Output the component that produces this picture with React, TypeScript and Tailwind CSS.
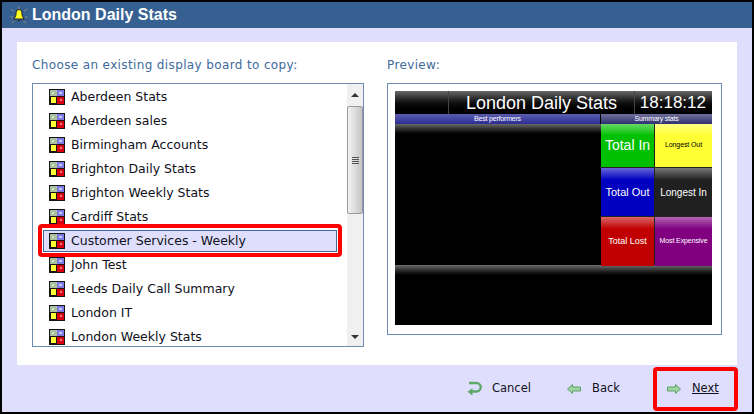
import React from "react";

const items = [
  "Aberdeen Stats",
  "Aberdeen sales",
  "Birmingham Accounts",
  "Brighton Daily Stats",
  "Brighton Weekly Stats",
  "Cardiff Stats",
  "Customer Services - Weekly",
  "John Test",
  "Leeds Daily Call Summary",
  "London IT",
  "London Weekly Stats",
];

function BoardIcon() {
  return (
    <svg width="16" height="16" viewBox="0 0 16 16" className="block shrink-0" shapeRendering="crispEdges">
      <rect width="16" height="16" fill="#141414" />
      <rect x="1" y="1" width="7" height="6" fill="#a9bf9e" />
      <rect x="8" y="1" width="7" height="6" fill="#7c7ce4" />
      <rect x="3" y="3" width="2" height="2" fill="#d4e2cc" />
      <rect x="10" y="3" width="3" height="2" fill="#c4c4fa" />
      <rect x="2" y="8" width="5" height="6" fill="#ffff33" />
      <rect x="8" y="8" width="7" height="7" fill="#d80010" />
      <rect x="11" y="10" width="2" height="2" fill="#ff8080" />
    </svg>
  );
}

function ArrowIcon({ dir }: { dir: "left" | "right" }) {
  return (
    <svg width="14" height="10" viewBox="0 0 14 10" className="shrink-0">
      <path
        d={dir === "left" ? "M5.5 0.5 L0.5 5 L5.5 9.5 V7 H13.5 V3 H5.5 Z" : "M8.5 0.5 L13.5 5 L8.5 9.5 V7 H0.5 V3 H8.5 Z"}
        fill="#9fd49f"
        stroke="#5f9f68"
        strokeWidth="1"
      />
    </svg>
  );
}

function CancelIcon() {
  return (
    <svg width="15" height="15" viewBox="0 0 15 15" className="shrink-0">
      <path d="M2 2 H9.5 A4 4 0 0 1 9.5 10.5 H5" fill="none" stroke="#5fa868" strokeWidth="2.4" />
      <path d="M5.5 7 L0.5 10.7 L5.5 14.5 Z" fill="#5fa868" />
    </svg>
  );
}

function Tile({
  className,
  label,
  textClass,
}: {
  className: string;
  label: string;
  textClass: string;
}) {
  return (
    <div className={`relative flex items-center justify-center overflow-hidden ${className}`}>
      <div className="absolute left-0 right-0 top-0 h-[12px] bg-gradient-to-b from-white/40 to-white/0" />
      <span className={`relative whitespace-nowrap font-['Liberation_Sans',sans-serif] ${textClass}`}>{label}</span>
    </div>
  );
}

export default function App() {
  return (
    <div className="relative w-[754px] h-[414px] border-2 border-black bg-[#dfdffd] flex flex-col overflow-hidden font-['DejaVu_Sans',sans-serif]">
      <header className="h-[26px] shrink-0 bg-[#365f92] flex items-center pl-[8px] gap-[4px]">
        <svg width="18" height="18" viewBox="0 0 18 18" className="shrink-0">
          <g stroke="#8d8d78" strokeWidth="1">
            <path d="M9 0.5V3M1 3L4 5.5M17 3L14 5.5M0.5 11H3M17.5 11H15M2 17L4.5 15M16 17L13.5 15" />
          </g>
          <path d="M9 3.5 C6.5 3.5 6 6 6 8 C6 10.5 4.5 11.5 4 13 H14 C13.5 11.5 12 10.5 12 8 C12 6 11.5 3.5 9 3.5Z" fill="#ffff20" stroke="#222" strokeWidth="1" />
          <path d="M7.5 14 H10.5 L9 15.5 Z" fill="#222" />
        </svg>
        <span className="text-white font-bold text-[16px] leading-none font-['Liberation_Sans',sans-serif]">London Daily Stats</span>
      </header>

      <main className="mx-[15px] mt-[14px] h-[323px] w-[720px] shrink-0 bg-white flex pt-[15px] pl-[15px] gap-[23px]">
        <section className="w-[332px] shrink-0">
          <h2 className="text-[12px] leading-[16px] text-[#40699c] font-normal tracking-[0.37px] mb-[10px]">Choose an existing display board to copy:</h2>
          <div className="relative h-[264px] border border-[#6d8cb4] flex overflow-hidden">
            <ul className="flex-1 pt-[1px]">
              {items.map((name, i) => (
                <li key={name} className={`h-[24px] flex items-center pl-[16px] gap-[6px] text-[12.5px] text-[#10101a] ${i === 6 ? "relative" : ""}`}>
                  {i === 6 && <div className="absolute left-[10px] right-[10px] top-[1px] bottom-[1px] border border-[#40699c] bg-[#dfdffd]" />}
                  <span className="relative"><BoardIcon /></span>
                  <span className="relative whitespace-nowrap">{name}</span>
                </li>
              ))}
            </ul>
            <div className="w-[16px] shrink-0 bg-[#f0f0f0] flex flex-col">
              <div className="h-[22px] flex items-center justify-center">
                <div className="w-0 h-0 border-x-[4px] border-x-transparent border-b-[4px] border-b-[#333]" />
              </div>
              <div className="h-[108px] border border-[#9a9a9a] rounded-[2px] bg-gradient-to-r from-[#f2f2f2] via-[#dcdcdc] to-[#c4c4c4] flex flex-col items-center justify-center gap-[1px]">
                <div className="w-[7px] h-[1px] bg-[#555]" />
                <div className="w-[7px] h-[1px] bg-[#555]" />
                <div className="w-[7px] h-[1px] bg-[#555]" />
                <div className="w-[7px] h-[1px] bg-[#555]" />
              </div>
              <div className="flex-1" />
              <div className="h-[18px] flex items-center justify-center">
                <div className="w-0 h-0 border-x-[4px] border-x-transparent border-t-[4px] border-t-[#333]" />
              </div>
            </div>
          </div>
        </section>

        <section className="w-[335px] shrink-0">
          <h2 className="text-[12px] leading-[16px] text-[#40699c] font-normal tracking-[0.37px] mb-[10px]">Preview:</h2>
          <div className="h-[252px] border border-[#6d8cb4] pl-[7px] pt-[7px]">
            <div className="w-[317px] h-[234px] bg-black flex flex-col font-['Liberation_Sans',sans-serif]">
              <div className="h-[23px] flex bg-gradient-to-b from-[#6a6a6a] via-[#111] to-black text-white">
                <div className="w-[54px] border-r border-[#444]" />
                <div className="w-[185px] flex items-center justify-center text-[18px] leading-none whitespace-nowrap">London Daily Stats</div>
                <div className="flex-1 border-l border-[#444] flex items-center justify-end pr-[6px] text-[17px] leading-none">18:18:12</div>
              </div>
              <div className="h-[10px] flex text-white text-[7px] leading-[10px] text-center tracking-[-0.2px]">
                <div className="w-[205px] bg-gradient-to-b from-[#5c5cae] to-[#2c2c92]">Best performers</div>
                <div className="flex-1 ml-[1px] bg-gradient-to-b from-[#70709a] to-[#303070]">Summary stats</div>
              </div>
              <div className="h-[141px] flex">
                <div className="w-[206px]">
                  <div className="h-[12px] bg-gradient-to-b from-[#6a6a6a] to-black" />
                </div>
                <div className="flex-1 grid grid-cols-[53px_57px] grid-rows-[43px_48px_49px] gap-px bg-[#222]">
                  <Tile className="bg-[#00c000]" label="Total In" textClass="text-white text-[14px]" />
                  <Tile className="bg-[#ffff33]" label="Longest Out" textClass="text-black text-[7px] tracking-[-0.1px]" />
                  <Tile className="bg-[#0000c0]" label="Total Out" textClass="text-white text-[11px]" />
                  <Tile className="bg-[#202020]" label="Longest In" textClass="text-white text-[10px]" />
                  <Tile className="bg-[#c00000]" label="Total Lost" textClass="text-white text-[9px]" />
                  <Tile className="bg-[#800080]" label="Most Expensive" textClass="text-white text-[7px] tracking-[-0.1px]" />
                </div>
              </div>
              <div className="h-[12px] bg-gradient-to-b from-[#6f6f6f] to-black" />
            </div>
          </div>
        </section>
      </main>

      <footer className="flex-1 flex items-center text-[11.5px] text-[#10101a] pl-[465px] relative">
        <a className="w-[100px] flex items-center gap-[10px]"><CancelIcon /><span>Cancel</span></a>
        <a className="w-[100px] flex items-center gap-[11px]"><ArrowIcon dir="left" /><span>Back</span></a>
        <a className="flex items-center gap-[11px]"><ArrowIcon dir="right" /><span className="underline">Next</span></a>
        <div className="absolute left-[651px] top-[2px] w-[85px] h-[44px] border-4 border-[#ff0000] rounded-[4px]" />
      </footer>

      <div className="absolute left-[36px] top-[222px] w-[304px] h-[33px] border-4 border-[#ff0000] rounded-[4px]" />
    </div>
  );
}
